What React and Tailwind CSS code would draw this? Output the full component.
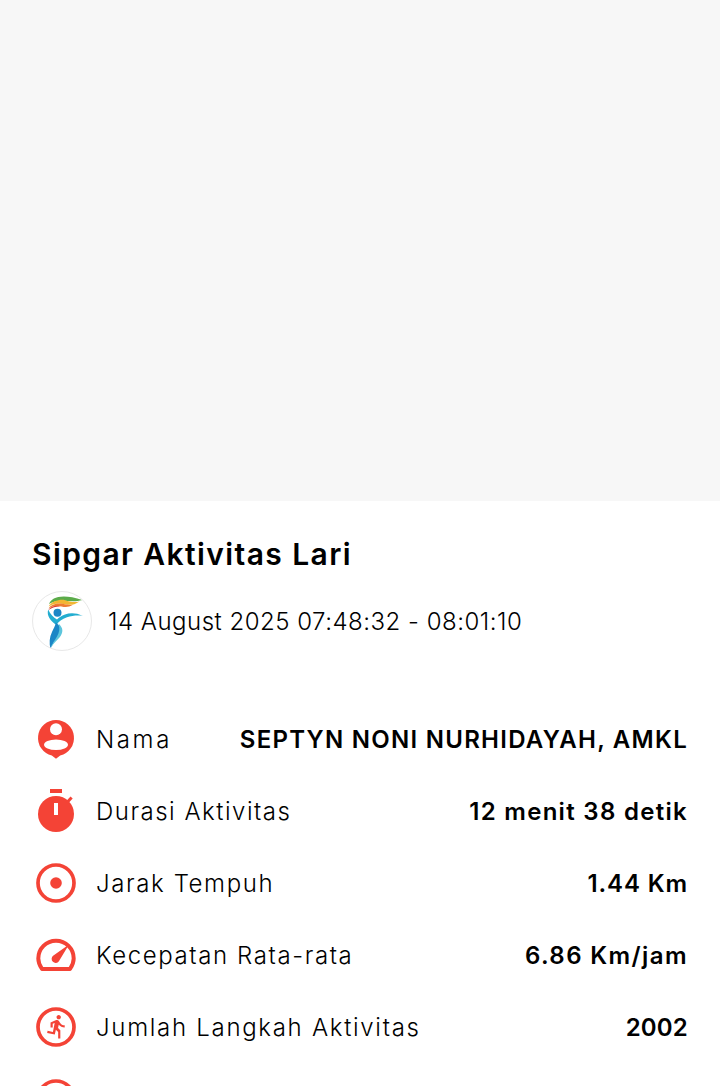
const red = "#f44336";

function Icon({ children }) {
  return (
    <svg viewBox="0 0 48 48" className="w-12 h-12 shrink-0" fill="none">
      {children}
    </svg>
  );
}

const PersonIcon = () => (
  <Icon>
    <path d="M24 4A18 18 0 0 1 28.2 39.5L24 42.8L19.8 39.5A18 18 0 0 1 24 4Z" fill={red} />
    <circle cx="24" cy="13.3" r="6" fill="#fff" />
    <ellipse cx="24" cy="28.7" rx="12" ry="5.3" fill="#fff" />
  </Icon>
);

const TimerIcon = () => (
  <Icon>
    <circle cx="24" cy="26" r="18" fill={red} />
    <rect x="18" y="1" width="12" height="4" fill={red} />
    <rect x="22" y="15" width="4" height="12" fill="#fff" />
    <path d="M35 14.5L39.6 9.5" stroke={red} strokeWidth="3" />
  </Icon>
);

const TargetIcon = () => (
  <Icon>
    <circle cx="24" cy="23" r="18" stroke={red} strokeWidth="3.7" />
    <circle cx="24" cy="23" r="5.8" fill={red} />
  </Icon>
);

const GaugeIcon = () => (
  <Icon>
    <path
      d="M10 37H38C40 34 41.7 31 41.7 26.4A17.7 17.7 0 0 0 6.3 26.4C6.3 31 8 34 10 37Z"
      stroke={red}
      strokeWidth="4"
      strokeLinejoin="round"
    />
    <path d="M37 12.6L26.9 29.2A4 4 0 1 1 21.1 23.8Z" fill={red} />
  </Icon>
);

const RunIcon = () => (
  <Icon>
    <circle cx="24" cy="23" r="18" stroke={red} strokeWidth="3.7" />
    <path
      transform="translate(12 9.4) scale(1.09)"
      fill={red}
      d="M13.49 5.48c1.1 0 2-.9 2-2s-.9-2-2-2-2 .9-2 2 .9 2 2 2zm-3.6 13.9l1-4.4 2.1 2v6h2v-7.5l-2.1-2 .6-3c1.3 1.5 3.3 2.5 5.5 2.5v-2c-1.9 0-3.5-1-4.3-2.4l-1-1.6c-.4-.6-1-1-1.7-1-.3 0-.5.1-.8.1l-5.2 2.2v4.7h2v-3.4l1.8-.7-1.6 8.1-4.9-1-.4 2 7 1.4z"
    />
  </Icon>
);

const RingIcon = () => (
  <Icon>
    <circle cx="24" cy="23" r="18" stroke={red} strokeWidth="3.7" />
  </Icon>
);

const Logo = () => (
  <div className="w-[60px] h-[60px] rounded-full border border-[#e8e8e8] bg-white shrink-0 overflow-hidden">
    <svg viewBox="0 0 60 60" className="block -m-px" style={{ width: 60, height: 60 }}>
      <path d="M17 13C19.5 5.5 31 2.5 50.5 9C42 11.5 36 9.5 29 9.8C24 10 20 11 17 13Z" fill="#5bab4a" />
      <path d="M16.7 15.5C19.5 9.8 29 8 33 9.2C38 10.5 42 12 47.5 10.4C42 14.4 37 14.2 33 13.2C27 11.8 21 12.2 16.7 15.5Z" fill="#f2b632" />
      <path d="M16.4 17.5C19 13 26 11.6 31 12.8C34 13.5 37 14.5 41 13.8C36.5 16.5 33 16.2 29.5 15.4C25 14.4 20 14.8 16.4 17.5Z" fill="#ee7d31" />
      <path d="M16.5 19C18.5 15.2 24 14.2 28 15.2C24 15.6 20 16.4 16.5 19Z" fill="#dc3f3a" />
      <circle cx="25.5" cy="21.8" r="4" fill="#1b86c6" />
      <path d="M16.2 18.5C14.3 24.5 18.5 30 24.5 34C26.5 30.5 30 27.8 35 26.2C40 24.6 46 24.2 50.8 24.9C44 21.6 38 21.8 33 23.4C29.5 24.5 27 26.6 25 28.4C21.5 26.4 18.2 23.5 16.2 18.5Z" fill="#23add0" />
      <path d="M23.8 31.5C30 36 30.5 41 26 46.5C23 50 20 53 18.5 58C17 52 17.4 46 20 41C21.5 37.5 23.3 35 23.8 31.5Z" fill="#1b86c6" />
      <path d="M26.5 32.5C31.5 37 31.5 41.5 27.5 46.5C24.5 50 21 52.5 18.5 58C20 52.5 23 49 25 45.5C27.5 41 28 37 26.5 32.5Z" fill="#5cc5dc" />
    </svg>
  </div>
);

const rows = [
  { icon: <PersonIcon />, label: "Nama", labelCls: "tracking-[2.6px]", value: "SEPTYN NONI NURHIDAYAH, AMKL", valueCls: "tracking-[1.27px]" },
  { icon: <TimerIcon />, label: "Durasi Aktivitas", labelCls: "tracking-[1.5px]", value: "12 menit 38 detik", valueCls: "tracking-[1.3px]" },
  { icon: <TargetIcon />, label: "Jarak Tempuh", labelCls: "tracking-[1.6px]", value: "1.44 Km", valueCls: "tracking-[0.9px]" },
  { icon: <GaugeIcon />, label: "Kecepatan Rata-rata", labelCls: "tracking-[1.6px]", value: "6.86 Km/jam", valueCls: "tracking-[1.4px]" },
  { icon: <RunIcon />, label: "Jumlah Langkah Aktivitas", labelCls: "tracking-[1.7px]", value: "2002", valueCls: "tracking-[0.2px]" },
  { icon: <RingIcon />, label: "", labelCls: "", value: "", valueCls: "" },
];

export default function App() {
  return (
    <div className="h-[1086px] overflow-hidden bg-white text-black font-['Inter',sans-serif]">
      <div className="h-[501px] bg-[#f7f7f7]" />
      <div className="px-8 pt-[34px]">
        <h1 className="text-[30px] leading-[38px] font-semibold tracking-[1.4px]">Sipgar Aktivitas Lari</h1>
        <div className="flex items-center gap-4 mt-[18px]">
          <Logo />
          <span className="text-[24px] leading-[32px] pt-[2px] font-light tracking-[0.5px]">14 August 2025 07:48:32 - 08:01:10</span>
        </div>
        <div className="mt-[53px] flex flex-col">
          {rows.map((r, i) => (
            <div key={i} className="h-[72px] flex items-center gap-4">
              {r.icon}
              <span className={`flex-1 text-[24px] font-light whitespace-nowrap ${r.labelCls}`}>{r.label}</span>
              <span className={`text-[24px] font-semibold whitespace-nowrap ${r.valueCls}`}>{r.value}</span>
            </div>
          ))}
        </div>
      </div>
    </div>
  );
}
